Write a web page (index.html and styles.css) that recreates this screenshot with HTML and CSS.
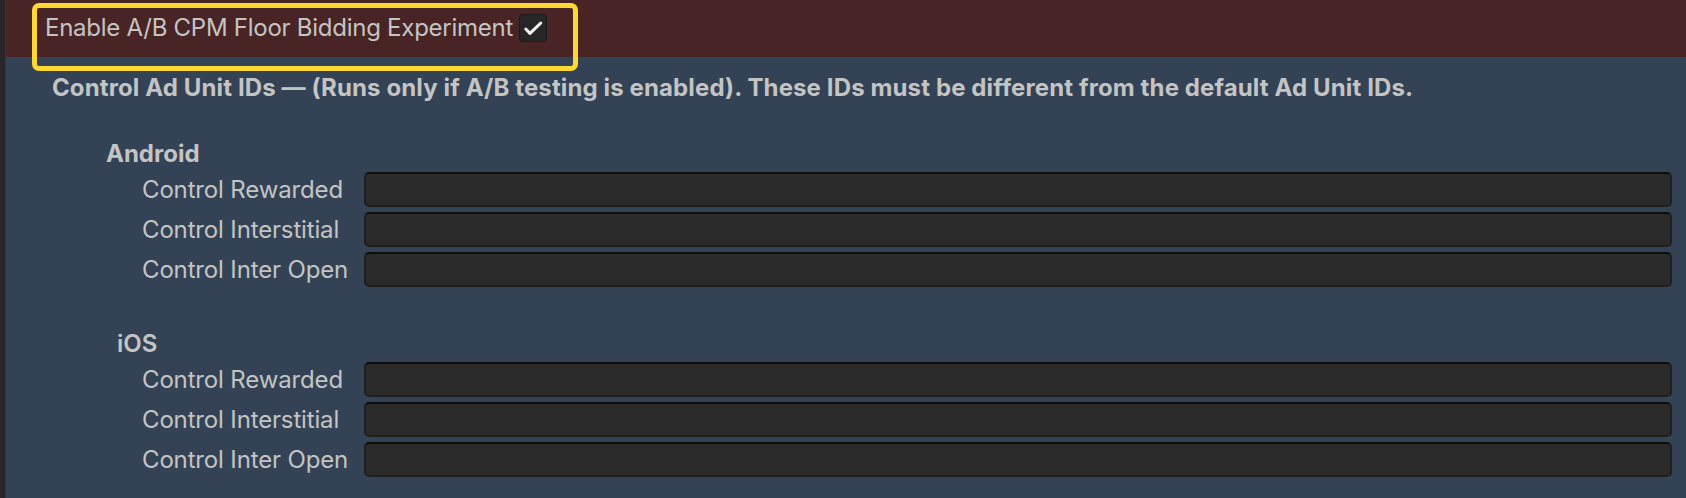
FILE: index.html
```html
<!DOCTYPE html>
<html lang="en">
<head>
<meta charset="utf-8">
<title>A/B CPM Floor Bidding</title>
<link rel="stylesheet" href="styles.css">
</head>
<body>
<div class="page">
  <div class="edge"></div>
  <div class="main">
    <div class="toggle-bar">
      <span class="toggle-label">Enable A/B CPM Floor Bidding Experiment</span>
      <span class="checkbox">
        <svg viewBox="0 0 28 28" width="28" height="28" aria-hidden="true">
          <path d="M6.8 15 L11 19.4 L21.8 9" fill="none" stroke="#f2f2f2" stroke-width="3" stroke-linecap="round" stroke-linejoin="round"/>
        </svg>
      </span>
    </div>
    <div class="highlight"></div>
    <div class="panel">
      <p class="note">Control Ad Unit IDs — (Runs only if A/B testing is enabled). These IDs must be different from the default Ad Unit IDs.</p>
      <section class="group group-android">
        <h3 class="group-title">Android</h3>
        <div class="row"><span class="row-label">Control Rewarded</span><div class="field"></div></div>
        <div class="row"><span class="row-label">Control Interstitial</span><div class="field"></div></div>
        <div class="row"><span class="row-label">Control Inter Open</span><div class="field"></div></div>
      </section>
      <section class="group group-ios">
        <h3 class="group-title">iOS</h3>
        <div class="row"><span class="row-label">Control Rewarded</span><div class="field"></div></div>
        <div class="row"><span class="row-label">Control Interstitial</span><div class="field"></div></div>
        <div class="row"><span class="row-label">Control Inter Open</span><div class="field"></div></div>
      </section>
    </div>
  </div>
</div>
</body>
</html>
```
FILE: styles.css
```css
* { box-sizing: border-box; }
html, body {
  margin: 0;
  padding: 0;
  width: 1686px;
  height: 498px;
  overflow: hidden;
  background: #334355;
}
body {
  font-family: Inter, "Noto Sans", sans-serif;
  font-size: 24px;
  color: #c4c4c4;
}
.page {
  display: flex;
  width: 1686px;
  height: 498px;
}
.edge {
  width: 6px;
  flex: none;
  background: #2a2526;
  border-right: 1px solid #4d2828;
}
.main {
  position: relative;
  flex: 1;
  display: flex;
  flex-direction: column;
}
.toggle-bar {
  height: 57px;
  flex: none;
  background: #482424;
  display: flex;
  align-items: center;
  padding-left: 39px;
  padding-bottom: 1px;
  gap: 6px;
}
.toggle-label {
  line-height: 30px;
  white-space: nowrap;
  letter-spacing: -0.26px;
}
.checkbox {
  width: 28px;
  height: 28px;
  border-radius: 4px;
  background: #262626;
  border: 1px solid #1a1a1a;
  display: flex;
  align-items: center;
  justify-content: center;
}
.checkbox svg { display: block; flex: none; }
.highlight {
  position: absolute;
  left: 26px;
  top: 3px;
  width: 546px;
  height: 68px;
  border: 5px solid #fdd835;
  border-radius: 7px;
  pointer-events: none;
}
.panel {
  flex: 1;
  display: flex;
  flex-direction: column;
  padding-right: 14px;
}
.note {
  margin: 16px 0 0 46px;
  font-weight: 700;
  line-height: 30px;
  white-space: nowrap;
  letter-spacing: 0.12px;
}
.group {
  display: flex;
  flex-direction: column;
  gap: 5px;
}
.group-android { margin-top: 36px; }
.group-ios { margin-top: 42px; }
.group-title {
  margin: 0 0 -2px;
  font-size: 24px;
  line-height: 30px;
  font-weight: 700;
}
.group-android .group-title { padding-left: 100px; }
.group-ios .group-title { padding-left: 111px; font-weight: 600; }
.row {
  display: flex;
  align-items: center;
  height: 35px;
}
.row-label {
  width: 222px;
  flex: none;
  padding-left: 136px;
  box-sizing: content-box;
  line-height: 30px;
  white-space: nowrap;
  letter-spacing: -0.15px;
}
.field {
  flex: 1;
  height: 35px;
  background: #2a2a2a;
  border: 2px solid #1f1f1f;
  border-top-color: #0e0e0e;
  border-radius: 5px;
}
```
